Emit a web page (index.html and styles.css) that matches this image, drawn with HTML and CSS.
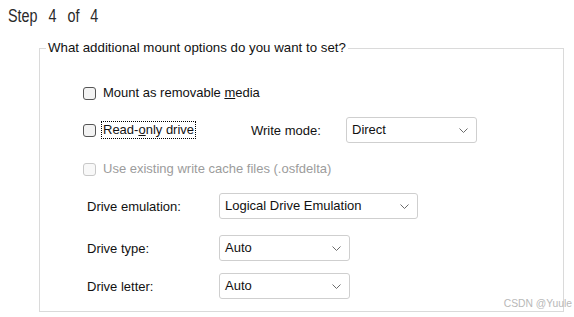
FILE: index.html
```html
<!DOCTYPE html>
<html lang="en">
<head>
<meta charset="utf-8">
<title>Step 4 of 4</title>
<link rel="stylesheet" href="styles.css">
</head>
<body>
<div class="page">
  <h1 class="title"><span class="title-text">Step 4 of 4</span></h1>
  <fieldset class="group">
    <legend class="legend">What additional mount options do you want to set?</legend>
    <div class="rows">
      <div class="row row-1">
        <label class="check">
          <span class="cb"></span>
          <span class="cb-label">Mount as removable <u>m</u>edia</span>
        </label>
      </div>
      <div class="row row-2">
        <label class="check check-fixed">
          <span class="cb"></span>
          <span class="cb-label focused">Read-<u>o</u>nly drive</span>
        </label>
        <span class="wm-label">Write mode:</span>
        <div class="combo combo-short">
          <span class="combo-text">Direct</span>
          <svg class="chev" width="9" height="5" viewBox="0 0 9 5"><path d="M0.5 0.5 L4.5 4.5 L8.5 0.5" fill="none" stroke="#6b6b6b" stroke-width="1"/></svg>
        </div>
      </div>
      <div class="row row-3">
        <label class="check disabled">
          <span class="cb"></span>
          <span class="cb-label">Use existing write cache files (.osfdelta)</span>
        </label>
      </div>
      <div class="row row-4">
        <span class="field-label">Drive emulation:</span>
        <div class="combo combo-long">
          <span class="combo-text">Logical Drive Emulation</span>
          <svg class="chev" width="9" height="5" viewBox="0 0 9 5"><path d="M0.5 0.5 L4.5 4.5 L8.5 0.5" fill="none" stroke="#6b6b6b" stroke-width="1"/></svg>
        </div>
      </div>
      <div class="row row-5">
        <span class="field-label">Drive type:</span>
        <div class="combo combo-short">
          <span class="combo-text">Auto</span>
          <svg class="chev" width="9" height="5" viewBox="0 0 9 5"><path d="M0.5 0.5 L4.5 4.5 L8.5 0.5" fill="none" stroke="#6b6b6b" stroke-width="1"/></svg>
        </div>
      </div>
      <div class="row row-6">
        <span class="field-label">Drive letter:</span>
        <div class="combo combo-short">
          <span class="combo-text">Auto</span>
          <svg class="chev" width="9" height="5" viewBox="0 0 9 5"><path d="M0.5 0.5 L4.5 4.5 L8.5 0.5" fill="none" stroke="#6b6b6b" stroke-width="1"/></svg>
        </div>
      </div>
    </div>
  </fieldset>
  <div class="watermark">CSDN @Yuule</div>
</div>
</body>
</html>
```

FILE: styles.css
```css
html, body {
  margin: 0;
  padding: 0;
  background: #ffffff;
}

body {
  font-family: "Liberation Sans", Arial, sans-serif;
  font-size: 13px;
  color: #111111;
}

.page {
  position: relative;
  width: 574px;
  height: 317px;
  overflow: hidden;
}

.title {
  margin: 0;
  padding: 6px 0 0 8px;
  font-family: "Liberation Sans", sans-serif;
  font-weight: normal;
  font-size: 17.5px;
  line-height: 20px;
  color: #2a2a2a;
}

.title-text {
  display: inline-block;
  transform: scaleX(0.82);
  transform-origin: left center;
  word-spacing: 8.5px;
  white-space: nowrap;
}

.group {
  box-sizing: border-box;
  width: 525px;
  margin: 14px 0 0 39px;
  padding: 0;
  border: 1px solid #dadada;
  min-width: 0;
}

.legend {
  margin-left: 6px;
  padding: 0 2px;
  font-size: 13.3px;
  line-height: 16px;
}

.rows {
  display: flex;
  flex-direction: column;
  padding: 24px 0 12px 43px;
}

.row {
  display: flex;
  align-items: center;
  height: 26px;
}

.row-2 { margin-top: 11px; }
.row-3 { margin-top: 13px; }
.row-4 { margin-top: 11px; }
.row-5 { margin-top: 16px; }
.row-6 { margin-top: 12px; }

.check {
  display: flex;
  align-items: center;
}

.check-fixed {
  width: 168px;
  flex: none;
}

.cb {
  box-sizing: border-box;
  width: 13px;
  height: 13px;
  border: 1px solid #555555;
  border-radius: 3px;
  background: #f3f3f3;
  margin-right: 5px;
  flex: none;
}

.cb-label {
  border: 1px solid transparent;
  padding: 0 1px;
  line-height: 16px;
}

.cb-label.focused {
  border: 1px dotted #000000;
}

.disabled .cb {
  border-color: #c8c8c8;
  background: #f8f8f8;
}

.disabled .cb-label {
  color: #9c9c9c;
}

.wm-label {
  width: 95px;
  flex: none;
}

.field-label {
  box-sizing: border-box;
  width: 136px;
  padding-left: 4px;
  flex: none;
}

.combo {
  box-sizing: border-box;
  height: 26px;
  border: 1px solid #cfcfcf;
  border-radius: 3px;
  background: #ffffff;
  display: flex;
  align-items: center;
  justify-content: space-between;
  padding: 0 8px 0 5px;
  flex: none;
}

.combo-short { width: 131px; }
.combo-long { width: 199px; }

.combo-text {
  line-height: 16px;
  white-space: nowrap;
}

.chev {
  display: block;
  flex: none;
}

.watermark {
  position: absolute;
  right: 2px;
  top: 297px;
  font-size: 10.3px;
  line-height: 13px;
  color: #b8b8b8;
}
```
